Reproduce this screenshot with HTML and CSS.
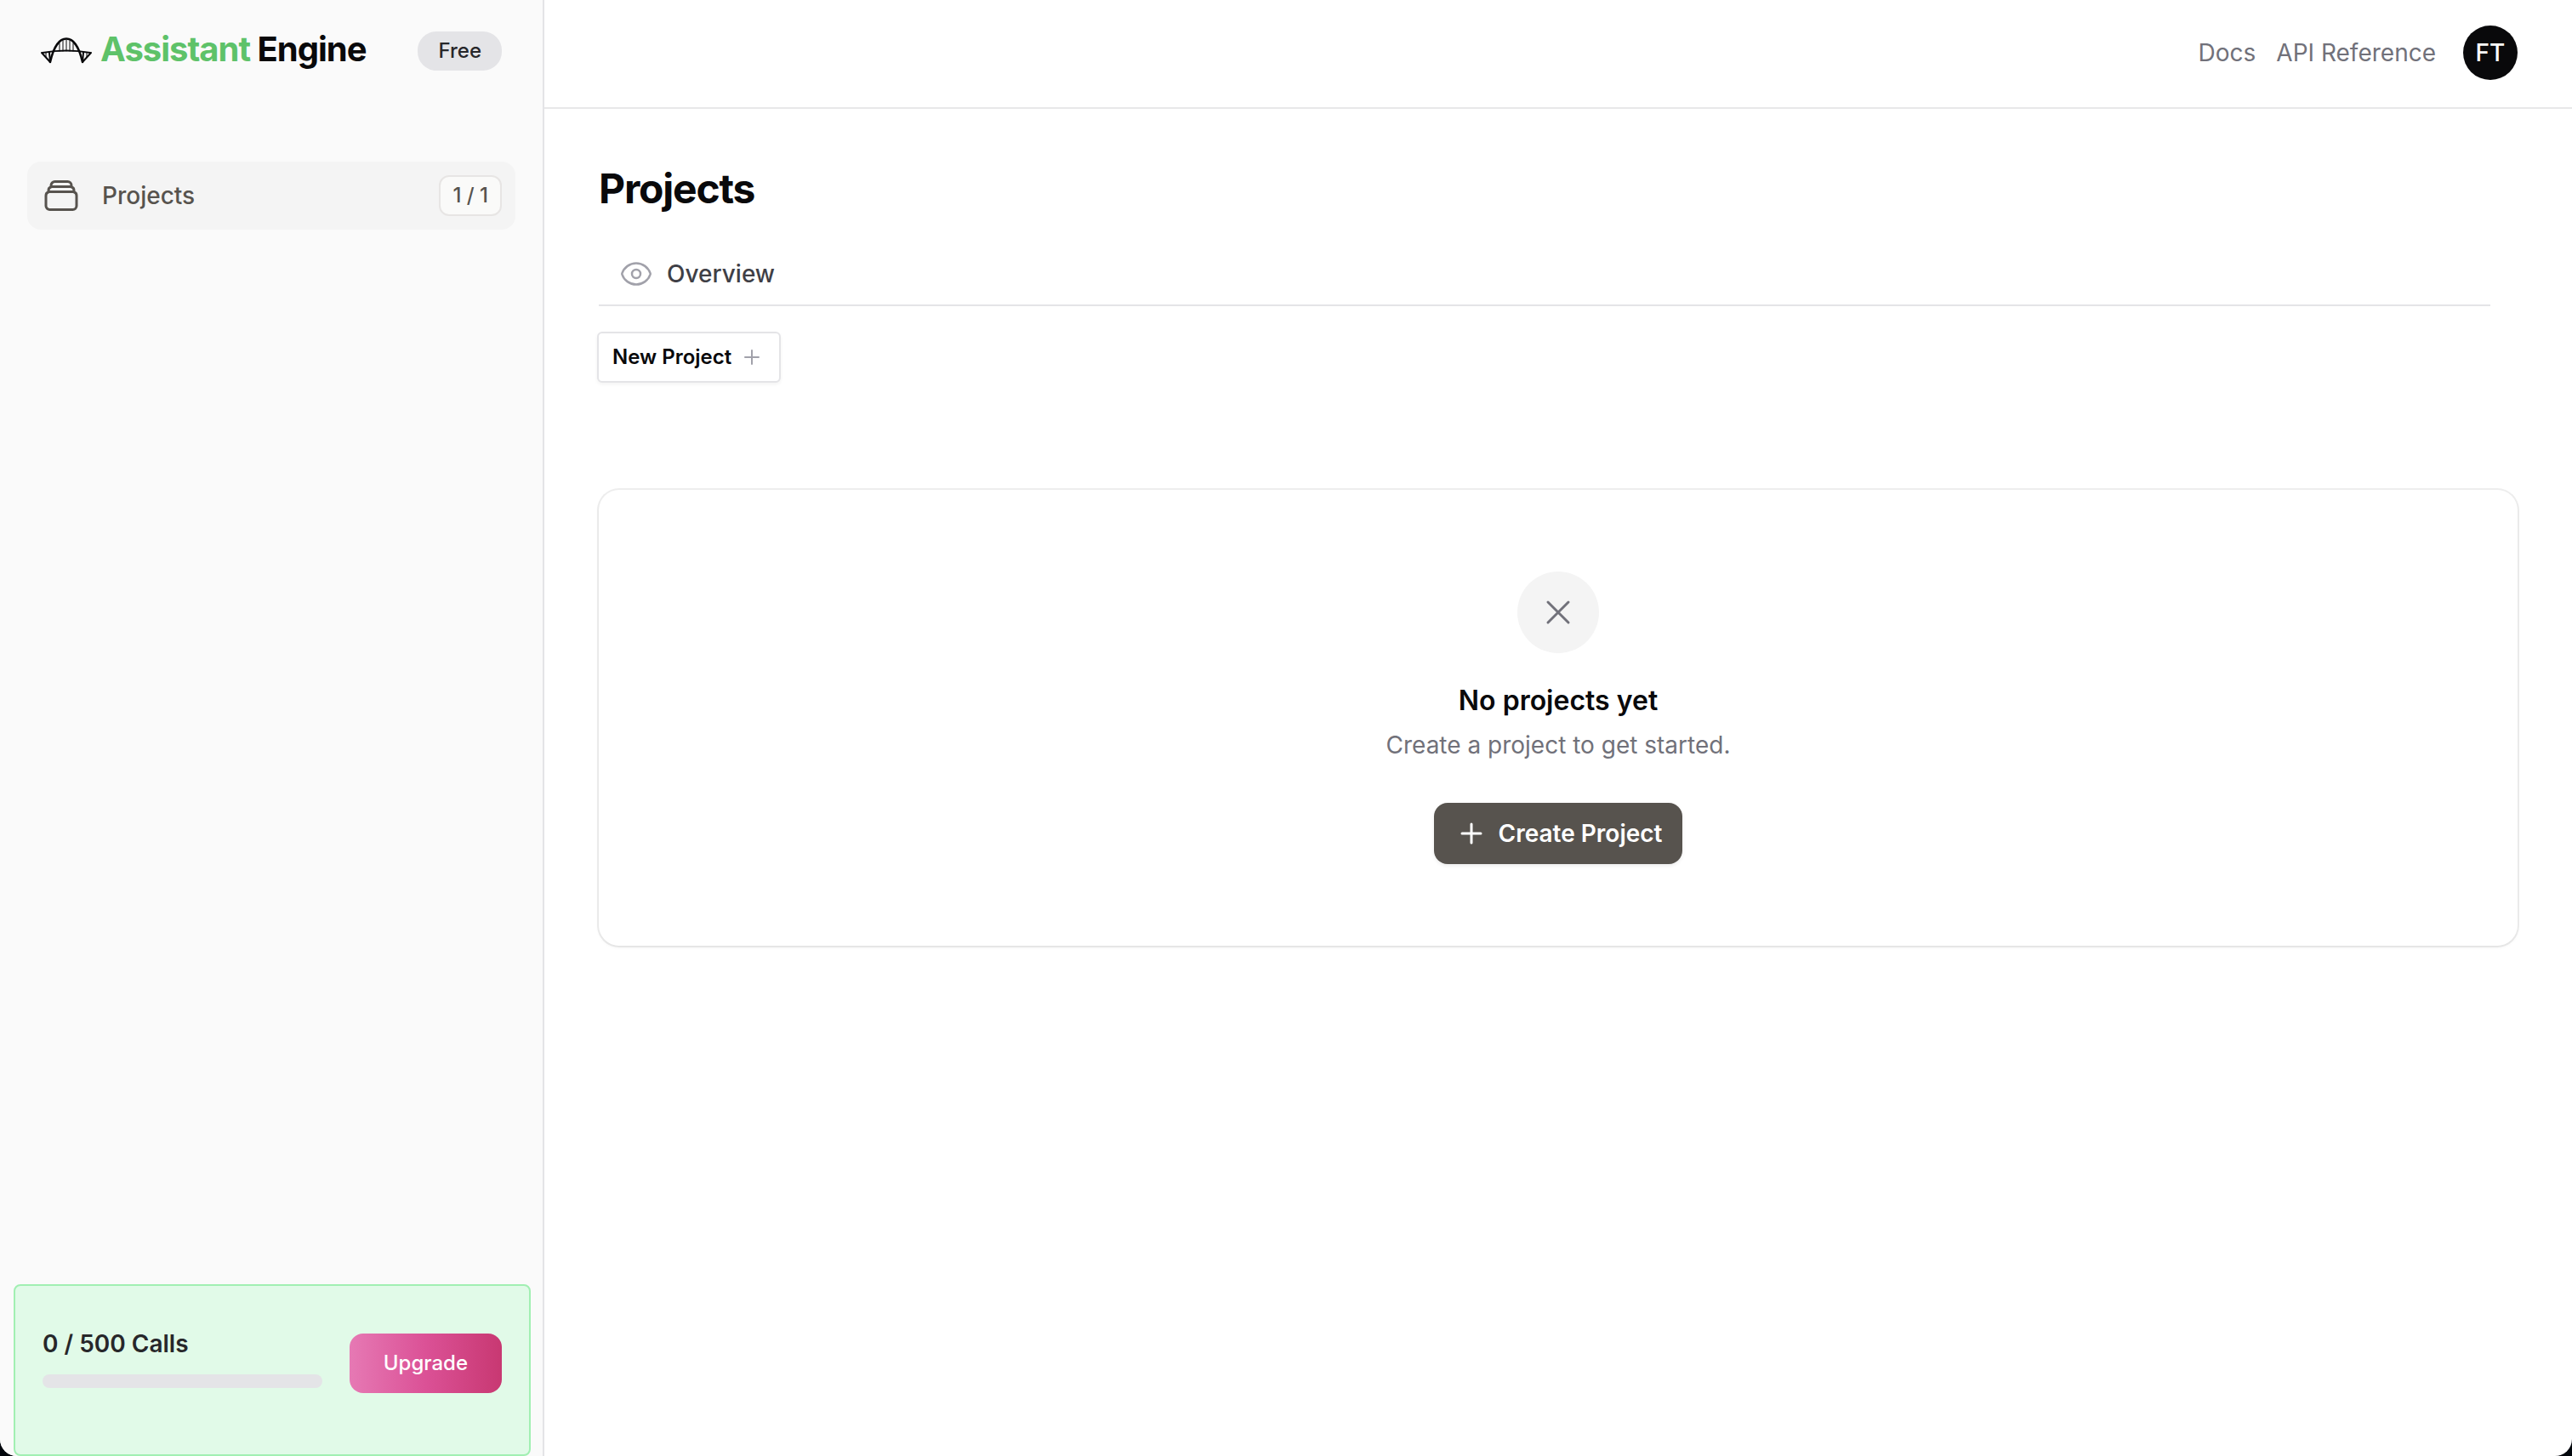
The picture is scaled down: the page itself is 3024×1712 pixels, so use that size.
FILE: index.html
```html
<!DOCTYPE html>
<html lang="en">
<head>
<meta charset="utf-8">
<meta name="viewport" content="width=device-width, initial-scale=1">
<title>Projects – Assistant Engine</title>
<link rel="stylesheet" href="styles.css">
</head>
<body>
<div class="app">
  <aside class="sidebar">
    <div class="brand-row">
      <a class="brand" href="#">
        <svg class="brand-icon" viewBox="0 0 60 32" fill="none" stroke="currentColor" stroke-linecap="round" stroke-linejoin="round" aria-hidden="true">
          <path stroke-width="2.5" d="M11 29C15 11 22 1.5 30 1.5S45 11 49 29"/>
          <path stroke-width="2" d="M2 18Q30 13 58 18"/>
          <path stroke-width="2" d="M1 18l10 11M59 18L49 29M11 29l-1-11M49 29l1-11"/>
          <path stroke-width="1" d="M22 7v9M26 4v12M30 3v13M34 4v12M38 7v9M6 18v5M54 18v5"/>
        </svg>
        <span class="brand-name"><span class="brand-accent">Assistant</span> Engine</span>
      </a>
      <span class="plan">Free</span>
    </div>
    <nav class="side-nav">
      <a class="side-link" href="#">
        <svg class="side-icon" viewBox="0 0 24 24" fill="none" stroke="currentColor" stroke-width="1.5" stroke-linecap="round" stroke-linejoin="round" aria-hidden="true">
          <path d="M6 6.878V6a2.25 2.25 0 0 1 2.25-2.25h7.5A2.25 2.25 0 0 1 18 6v.878m-12 0c.235-.083.487-.128.75-.128h10.5c.263 0 .515.045.75.128m-12 0A2.25 2.25 0 0 0 4.5 9v.878m13.5-3A2.25 2.25 0 0 1 19.5 9v.878m0 0a2.246 2.246 0 0 0-.75-.128H5.25c-.263 0-.515.045-.75.128m15 0A2.25 2.25 0 0 1 21 12v6a2.25 2.25 0 0 1-2.25 2.25H5.25A2.25 2.25 0 0 1 3 18v-6c0-.98.626-1.813 1.5-2.122"/>
        </svg>
        <span class="side-label">Projects</span>
        <span class="count">1 / 1</span>
      </a>
    </nav>
    <section class="usage">
      <div class="usage-meter">
        <label class="usage-label" for="calls">0 / 500 Calls</label>
        <progress class="usage-bar" id="calls" value="0" max="500"></progress>
      </div>
      <button class="upgrade" type="button">Upgrade</button>
    </section>
  </aside>
  <div class="page">
    <header class="topbar">
      <nav class="top-links">
        <a href="#">Docs</a>
        <a href="#">API Reference</a>
      </nav>
      <button class="avatar" type="button">FT</button>
    </header>
    <main class="content">
      <h1 class="title">Projects</h1>
      <nav class="tabs">
        <a class="tab" href="#">
          <svg class="tab-icon" viewBox="0 0 24 24" fill="none" stroke="currentColor" stroke-width="1.5" stroke-linecap="round" stroke-linejoin="round" aria-hidden="true">
            <path d="M2.036 12.322a1.012 1.012 0 0 1 0-.639C3.423 7.51 7.36 4.5 12 4.5c4.638 0 8.573 3.007 9.963 7.178.07.207.07.431 0 .639C20.577 16.49 16.64 19.5 12 19.5c-4.638 0-8.573-3.007-9.963-7.178Z"/>
            <path d="M15 12a3 3 0 1 1-6 0 3 3 0 0 1 6 0Z"/>
          </svg>
          Overview
        </a>
      </nav>
      <button class="new-project" type="button">
        New Project
        <svg class="new-icon" viewBox="0 0 24 24" fill="none" stroke="currentColor" stroke-width="2" stroke-linecap="round" aria-hidden="true"><path d="M12 4v16M4 12h16"/></svg>
      </button>
      <section class="empty">
        <span class="empty-badge">
          <svg class="empty-icon" viewBox="0 0 24 24" fill="none" stroke="currentColor" stroke-width="1.5" stroke-linecap="round" aria-hidden="true"><path d="M6 18L18 6M6 6l12 12"/></svg>
        </span>
        <h2 class="empty-title">No projects yet</h2>
        <p class="empty-text">Create a project to get started.</p>
        <button class="create" type="button">
          <svg class="create-icon" viewBox="0 0 40 40" fill="none" stroke="currentColor" stroke-width="3" stroke-linecap="round" aria-hidden="true"><path d="M20 9v22M9 20h22"/></svg>
          Create Project
        </button>
      </section>
    </main>
  </div>
</div>
</body>
</html>
```

FILE: styles.css
```css
* { box-sizing: border-box; }

html { background: #02060c; }

body {
  margin: 0;
  font-family: Inter, "Liberation Sans", sans-serif;
  font-size: 28px;
  line-height: 40px;
  color: #09090b;
}

a { color: inherit; text-decoration: none; }

button {
  border: 0;
  font: inherit;
  cursor: pointer;
}

svg { display: block; flex: none; }

.app {
  display: grid;
  grid-template-columns: 640px 1fr;
  min-height: 100vh;
  overflow: hidden;
  border-radius: 0 0 20px 20px;
  background: #fff;
}

/* Sidebar */
.sidebar {
  display: flex;
  flex-direction: column;
  border-right: 2px solid #e4e4e7;
  background: #fafafa;
}

.brand-row {
  display: flex;
  align-items: center;
  justify-content: space-between;
  height: 120px;
  padding: 0 48px;
}

.brand {
  display: flex;
  align-items: center;
  gap: 10px;
}

.brand-icon { width: 60px; height: 32px; }

.brand-name {
  padding-bottom: 4px;
  font-size: 40px;
  font-weight: 700;
  letter-spacing: -0.025em;
}

.brand-accent { color: #5ec269; }

.plan {
  padding: 6px 24px;
  border-radius: 22px;
  background: #e4e4e7;
  color: #27272a;
  font-size: 24px;
  font-weight: 500;
  line-height: 34px;
}

.side-nav { padding: 70px 32px 0; }

.side-link {
  display: flex;
  align-items: center;
  gap: 24px;
  height: 80px;
  padding: 0 16px;
  border-radius: 16px;
  background: #f4f4f4;
  color: #57534e;
  font-weight: 500;
}

.side-icon { width: 48px; height: 48px; }

.side-label { flex: 1; }

.count {
  padding: 6px 14px;
  border: 2px solid #e7e5e4;
  border-radius: 12px;
  background: #fafaf9;
  font-size: 24px;
  line-height: 32px;
}

.usage {
  display: flex;
  align-items: center;
  gap: 32px;
  margin: auto 14px 0 16px;
  padding: 48px 32px 64px;
  border: 2px solid #a1efb2;
  border-radius: 8px;
  background: #e1fae8;
}

.usage-meter {
  display: flex;
  flex: 1;
  flex-direction: column;
  gap: 16px;
  padding-bottom: 14px;
}

.usage-label { color: #27272a; font-weight: 600; }

.usage-bar {
  width: 100%;
  height: 16px;
  overflow: hidden;
  appearance: none;
  border: 0;
  border-radius: 8px;
  background: #e4e4e7;
}

.usage-bar::-webkit-progress-bar { background: #e4e4e7; }

.upgrade {
  height: 70px;
  padding: 0 40px;
  border-radius: 16px;
  background: linear-gradient(to right, #e679b4, #db5196, #c83872);
  color: #fff;
  font-size: 24px;
  font-weight: 500;
}

/* Header */
.topbar {
  display: flex;
  align-items: center;
  justify-content: flex-end;
  gap: 32px;
  height: 128px;
  padding: 0 64px 2px;
  border-bottom: 2px solid #e8e8e9;
}

.top-links {
  display: flex;
  gap: 24px;
  color: #71717a;
}

.avatar {
  width: 64px;
  height: 64px;
  padding: 0;
  border-radius: 50%;
  background: #09090b;
  color: #fff;
  font-weight: 500;
}

/* Content */
.content {
  display: flex;
  flex-direction: column;
  align-items: flex-start;
  padding: 64px;
}

.title {
  margin: 0;
  font-size: 48px;
  font-weight: 700;
  line-height: 60px;
  letter-spacing: -0.025em;
}

.tabs {
  align-self: stretch;
  margin: 32px 32px 30px 0;
  padding: 18px 24px 16px;
  border-bottom: 2px solid #e4e4e7;
}

.tab {
  display: flex;
  align-items: center;
  gap: 16px;
  color: #3f3f46;
  font-weight: 500;
}

.tab-icon { width: 40px; height: 40px; color: #a1a1aa; }

.new-project {
  display: flex;
  align-items: center;
  gap: 12px;
  height: 60px;
  margin-left: -2px;
  padding: 0 20px 0 16px;
  border: 2px solid #e4e4e7;
  border-radius: 6px;
  background: #fff;
  box-shadow: 0 2px 4px rgb(0 0 0 / 5%);
  color: #09090b;
  font-size: 24px;
  font-weight: 600;
}

.new-icon { width: 24px; height: 24px; color: #a1a1aa; }

.empty {
  display: flex;
  flex-direction: column;
  align-items: center;
  align-self: stretch;
  margin-top: 126px;
  padding: 96px;
  border-radius: 24px;
  box-shadow: 0 0 0 2px rgb(9 9 11 / 7%), 0 2px 4px rgb(0 0 0 / 5%);
}

.empty-badge {
  display: grid;
  place-items: center;
  width: 96px;
  height: 96px;
  border-radius: 50%;
  background: #f4f4f4;
  color: #71717a;
}

.empty-icon { width: 48px; height: 48px; }

.empty-title {
  margin: 32px 0 8px;
  font-size: 32px;
  font-weight: 600;
  line-height: 48px;
}

.empty-text {
  margin: 0 0 48px;
  color: #71717a;
}

.create {
  display: flex;
  align-items: center;
  gap: 12px;
  height: 72px;
  padding: 0 24px;
  border-radius: 16px;
  background: #57534e;
  box-shadow: 0 2px 4px rgb(0 0 0 / 8%);
  color: #fff;
  font-weight: 600;
}

.create-icon { width: 40px; height: 40px; }
```
